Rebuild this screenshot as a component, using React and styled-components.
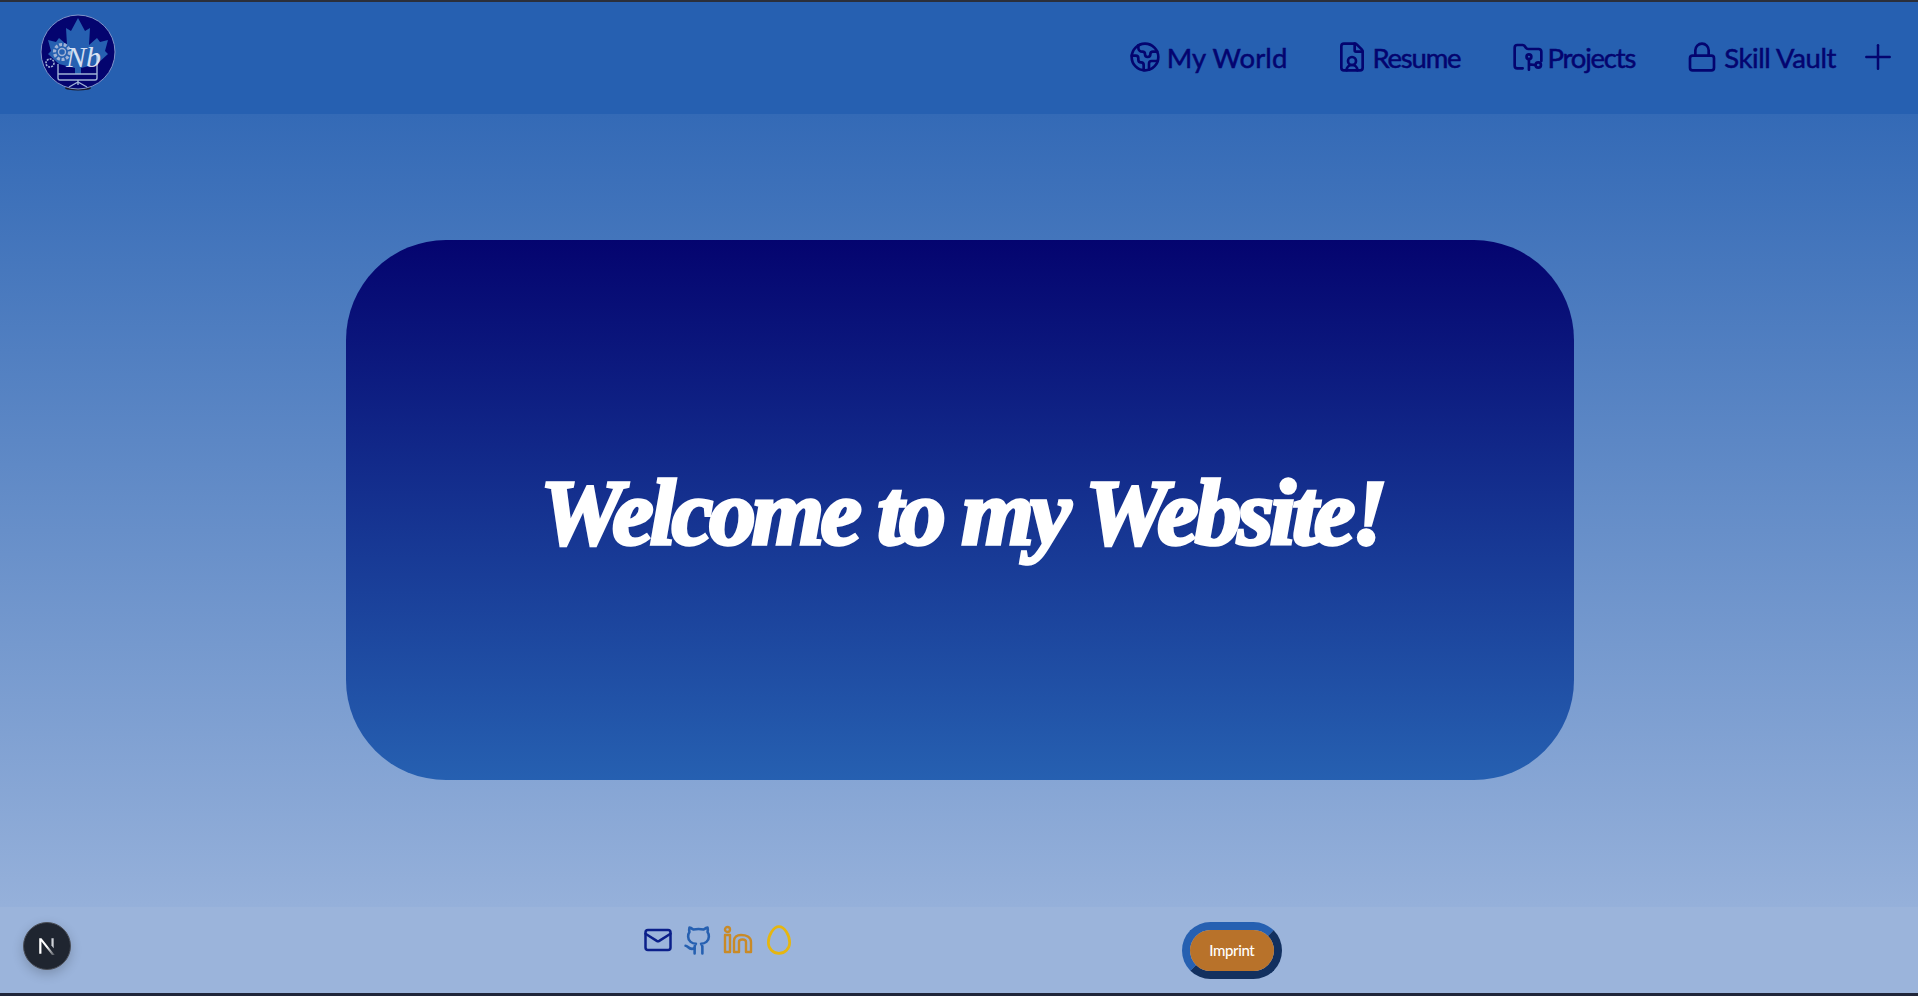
import React from 'react';
import styled, { createGlobalStyle } from 'styled-components';
import { Earth, FileUser, Lock, Plus, Mail, Github, Egg } from 'lucide-react';

const GlobalStyle = createGlobalStyle`
	html, body {
		margin: 0;
		padding: 0;
		height: 100%;
	}
	#root {
		height: 100%;
	}
`;

const Page = styled.div`
	height: 996px;
	box-sizing: border-box;
	display: flex;
	flex-direction: column;
	border-top: 2px solid #2b2f3a;
	border-bottom: 3px solid #20263a;
	background: linear-gradient(180deg, #2660b1 0%, #a0b8de 100%);
	font-family: Lato, 'Liberation Sans', sans-serif;
	overflow: hidden;
`;

const Header = styled.header`
	height: 112px;
	flex: none;
	display: flex;
	align-items: center;
	justify-content: space-between;
	padding: 0 20px 0 39px;
	background: #2660b1;
`;

const LogoMark = styled.svg`
	width: 78px;
	height: 78px;
	margin-top: -10px;
	display: block;
`;

const Nav = styled.nav`
	display: flex;
	align-items: center;
	margin-top: -2px;
	color: #04046f;
`;

const NavItem = styled.a`
	display: flex;
	align-items: center;
	gap: ${(p) => p.$gap}px;
	margin-right: ${(p) => p.$after}px;
	font-size: 27.5px;
	font-weight: 400;
	letter-spacing: ${(p) => p.$spacing || 0}px;
	-webkit-text-stroke: 0.5px #04046f;
	white-space: nowrap;
`;

const Main = styled.main`
	flex: 1;
	display: flex;
	align-items: center;
	justify-content: center;
	padding: 0 0 2px 2px;
`;

const Hero = styled.section`
	width: 1228px;
	height: 540px;
	border-radius: 100px;
	display: flex;
	align-items: center;
	justify-content: center;
	background: linear-gradient(180deg, #04046f 0%, #2660b1 100%);
`;

const Title = styled.h1`
	margin: 5px 0 0 4px;
	color: #fff;
	font-family: 'Liberation Serif', serif;
	font-size: 93px;
	font-weight: 700;
	font-style: italic;
	letter-spacing: -3.8px;
	-webkit-text-stroke: 3.5px #fff;
	white-space: nowrap;
`;

const Footer = styled.footer`
	height: 86px;
	flex: none;
	display: flex;
	align-items: flex-start;
	background: #9bb4db;
	padding-left: 643px;
`;

const Socials = styled.div`
	display: flex;
	align-items: center;
	gap: 9.6px;
	margin-top: 17px;
`;

const Social = styled.a`
	display: flex;
	color: ${(p) => p.$color};
`;

const ImprintRing = styled.div`
	margin: 15px 0 0 387px;
	width: 100px;
	height: 57px;
	box-sizing: border-box;
	border-radius: 29px;
	border: 8px solid;
	border-color: #2660b1 #12305f #12305f #2660b1;
	display: flex;
`;

const ImprintButton = styled.button`
	flex: 1;
	border: none;
	border-radius: 21px;
	padding: 0 0 2px;
	background: #b8722a;
	color: #fff;
	font-family: Lato, 'Liberation Sans', sans-serif;
	font-size: 15px;
	font-weight: 500;
	letter-spacing: -0.4px;
`;

const DevBadge = styled.div`
	position: fixed;
	left: 23px;
	top: 922px;
	width: 48px;
	height: 48px;
	box-sizing: border-box;
	border-radius: 50%;
	background: #1f2530;
	border: 1px solid #4b4f58;
	box-shadow: 0 4px 12px rgba(0, 0, 0, 0.2);
	display: flex;
	align-items: center;
	justify-content: center;
`;

const Logo = () => (
	<LogoMark viewBox="0 0 78 78">
		<ellipse cx="39" cy="74" rx="13" ry="2.5" fill="#1a1a2a" />
		<circle cx="39" cy="38" r="37" fill="#04046f" stroke="#7f93c8" strokeWidth="1" />
		<path
			d="M39 4 L46 17 L51 14 L50 31 L58 24 L61 28 L69 26 L66 37 L69 40 L58 50 L42 54 L42 60 L36 60 L36 54 L20 50 L9 40 L12 37 L9 26 L17 28 L20 24 L28 31 L27 14 L32 17 Z"
			fill="#2660b1"
		/>
		<g fill="none" stroke="#9fb2d6" strokeWidth="1.4">
			<path d="M19 50 V64 a2 2 0 0 0 2 2 H56 a2 2 0 0 0 2-2 V39" />
			<path d="M19 60 H58 M39 66 V71 M30 73 L39 68 L48 73" />
			<circle cx="23" cy="38" r="7.5" strokeWidth="3.2" strokeDasharray="3 1.6" />
			<circle cx="23" cy="38" r="3.5" />
			<circle cx="11" cy="49" r="4" strokeWidth="1.6" strokeDasharray="2 1" />
		</g>
		<text x="27" y="53" fill="#e8eefa" fontFamily="Liberation Serif, serif" fontStyle="italic" fontSize="30" fontWeight="400" opacity="0.9">
			Nb
		</text>
	</LogoMark>
);

const FolderKeyIcon = () => (
	<svg width="32" height="32" viewBox="0 0 24 24" fill="none" stroke="currentColor" strokeWidth="2" strokeLinecap="round" strokeLinejoin="round">
		<path d="M8 20.5H4a2 2 0 0 1-2-2V5a2 2 0 0 1 2-2h3.9a2 2 0 0 1 1.69.9l.81 1.2a2 2 0 0 0 1.67.9H20a2 2 0 0 1 2 2v7" />
		<circle cx="12.7" cy="11.8" r="1.8" />
		<path d="M12.7 13.6V21.5M12.7 17.5L17.5 18" />
		<circle cx="19.7" cy="18" r="2" />
	</svg>
);

const LinkedinOutline = () => (
	<svg width="30" height="30" viewBox="0 0 30 30" fill="none" stroke="currentColor" strokeWidth="2.4" strokeLinejoin="round">
		<circle cx="4.5" cy="4.5" r="2.5" />
		<path d="M2 10 H7 V27 H2 Z" />
		<path d="M11 27 V16 C11 12 14 10 18 10 C23 10 28 12 28 17 V27 H23 V17 C23 15 21 14.5 19.5 14.5 C17.5 14.5 16 15 16 17 V27 Z" />
	</svg>
);

const App = () => (
	<Page>
		<GlobalStyle />
		<Header>
			<Logo />
			<Nav>
				<NavItem $after={49} $spacing={0.1} $gap={5.5}>
					<Earth size={32} strokeWidth={2} />
					My World
				</NavItem>
				<NavItem $after={52} $spacing={-1.2} $gap={4}>
					<FileUser size={32} strokeWidth={2} />
					Resume
				</NavItem>
				<NavItem $after={51} $gap={3} $spacing={-1.2}>
					<FolderKeyIcon />
					Projects
				</NavItem>
				<NavItem $after={22} $spacing={-0.4} $gap={6}>
					<Lock size={32} strokeWidth={2} />
					Skill Vault
				</NavItem>
				<Plus size={40} strokeWidth={1.5} />
			</Nav>
		</Header>
		<Main>
			<Hero>
				<Title>Welcome to my Website!</Title>
			</Hero>
		</Main>
		<Footer>
			<Socials>
				<Social $color="#0b1f8a">
					<Mail size={30} strokeWidth={2} />
				</Social>
				<Social $color="#2660b1">
					<Github size={31} strokeWidth={2} />
				</Social>
				<Social $color="#c98a27">
					<LinkedinOutline />
				</Social>
				<Social $color="#e6b60f">
					<Egg size={32} strokeWidth={2} />
				</Social>
			</Socials>
			<ImprintRing>
				<ImprintButton>Imprint</ImprintButton>
			</ImprintRing>
		</Footer>
		<DevBadge>
			<svg width="20" height="20" viewBox="0 0 18 18">
				<defs>
					<linearGradient id="nFade" x1="0" y1="0" x2="1" y2="1">
						<stop offset="0.5" stopColor="#fff" />
						<stop offset="1" stopColor="#fff" stopOpacity="0.2" />
					</linearGradient>
				</defs>
				<path d="M2 2 H4 L16 17 H13.5 L4 5 V16 H2 Z" fill="url(#nFade)" />
				<path d="M13 2 H15 V11 L13 8.5 Z" fill="#cfd2d8" />
			</svg>
		</DevBadge>
	</Page>
);

export default App;
